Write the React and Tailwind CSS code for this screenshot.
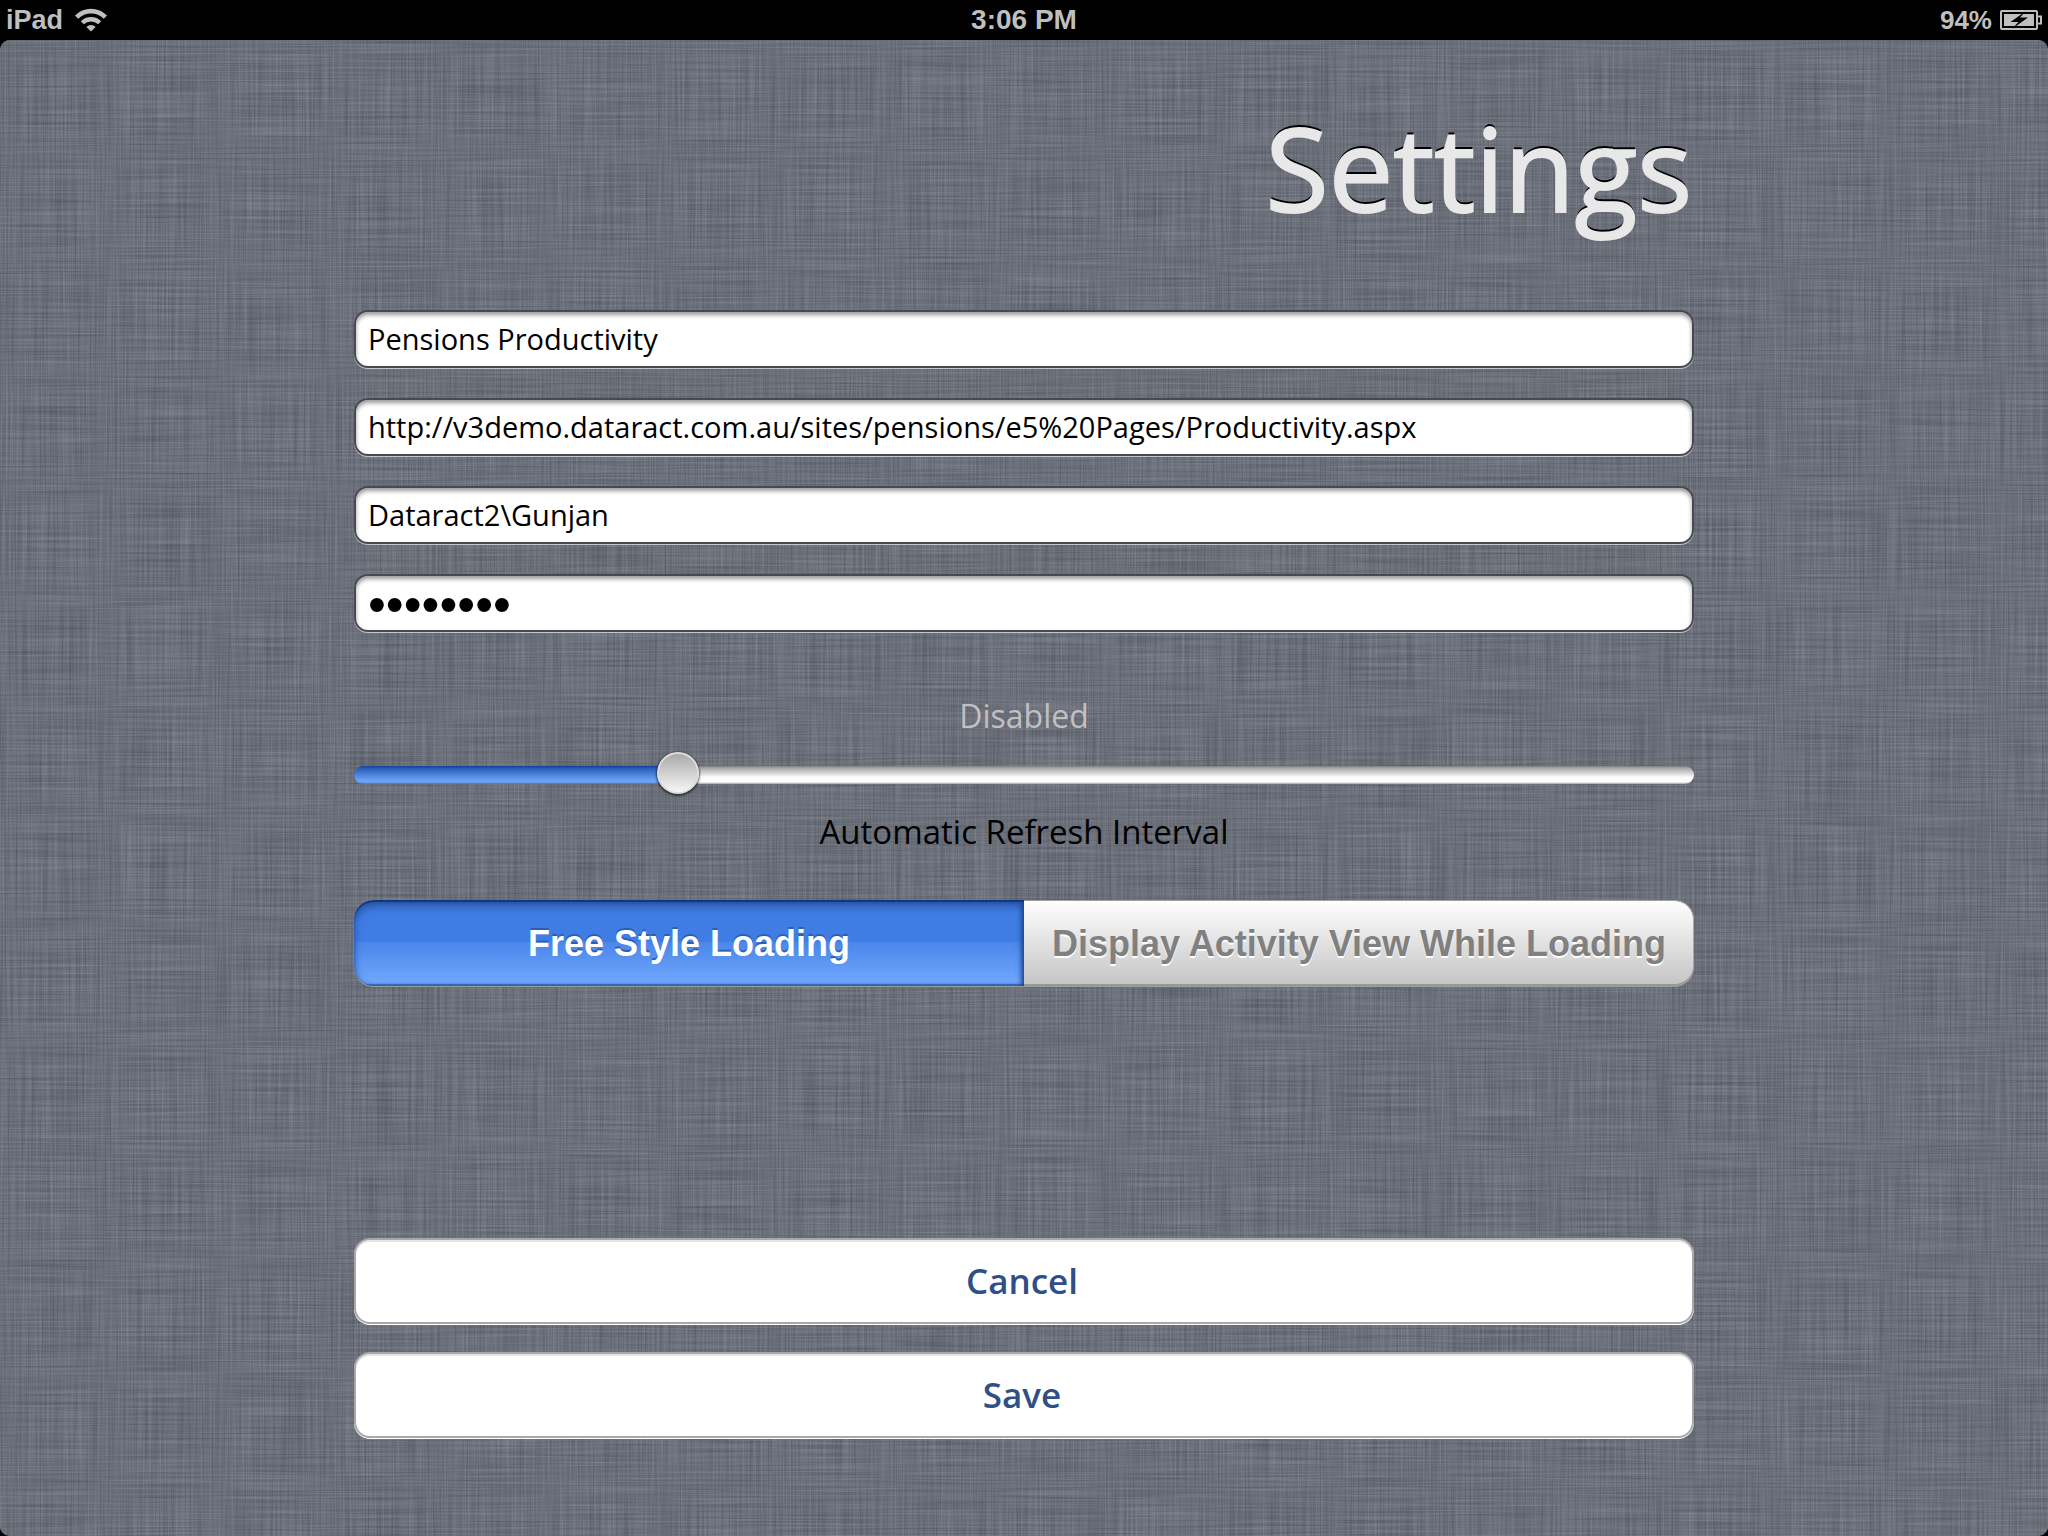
import { useState } from "react";

const FIELD =
  "block h-[58px] w-full rounded-[14px] border-2 border-[#484a50] bg-white px-3 text-black outline-none shadow-[inset_0_3px_4px_rgba(0,0,0,0.4),0_1px_0_#c4c6ca]";

const TEXT_FIELD = "pb-0.5 font-['Open_Sans',sans-serif] text-[29px]";

const ACTION =
  "h-[86px] w-full rounded-[16px] border-2 border-[#a8a8a9] bg-white pr-1 font-['Open_Sans',sans-serif] text-[35px] font-semibold text-[#2f4f87] shadow-[inset_0_2px_0_#e6e6e6,0_1px_0_#ffffff]";

function Linen() {
  return (
    <svg className="absolute inset-0 h-full w-full" aria-hidden="true">
      <filter id="linen" x="0" y="0" width="100%" height="100%" colorInterpolationFilters="sRGB">
        <feTurbulence type="fractalNoise" baseFrequency="0.6 0.009" numOctaves="2" seed="4" />
        <feColorMatrix
          result="warp"
          values="0.3 0 0 0 0.27  0.3 0 0 0 0.286  0.3 0 0 0 0.325  0 0 0 0 1"
        />
        <feTurbulence type="fractalNoise" baseFrequency="0.009 0.6" numOctaves="2" seed="9" />
        <feColorMatrix
          result="weft"
          values="0.3 0 0 0 0.27  0.3 0 0 0 0.286  0.3 0 0 0 0.325  0 0 0 0 1"
        />
        <feComposite in="warp" in2="weft" operator="arithmetic" k1="0" k2="0.5" k3="0.5" k4="0" />
      </filter>
      <rect width="100%" height="100%" filter="url(#linen)" />
    </svg>
  );
}

function WifiIcon() {
  return (
    <svg className="h-6 w-8" viewBox="0 0 32 24" fill="none" stroke="#bfbfbf" aria-label="Wi-Fi">
      <path d="M1.6 9.1a20.4 20.4 0 0 1 28.8 0" strokeWidth="4.6" />
      <path d="M7.3 14.8a12.3 12.3 0 0 1 17.4 0" strokeWidth="4.4" />
      <path d="M16 23.5 11.4 18.9a6.5 6.5 0 0 1 9.2 0z" fill="#bfbfbf" stroke="none" />
    </svg>
  );
}

function BatteryIcon() {
  return (
    <svg className="h-5 w-[42px]" viewBox="0 0 42 20" aria-label="Charging">
      <rect x="1" y="1" width="36" height="18" rx="1" fill="none" stroke="#bfbfbf" strokeWidth="2" />
      <path d="M38 6.5h3v7h-3" fill="none" stroke="#bfbfbf" strokeWidth="2" />
      <rect x="4" y="4" width="30" height="12" fill="#bfbfbf" />
      <path d="M26 1 10.5 12h8L12 19l16-11.5h-8z" fill="#000" />
    </svg>
  );
}

export default function App() {
  const [name, setName] = useState("Pensions Productivity");
  const [url, setUrl] = useState(
    "http://v3demo.dataract.com.au/sites/pensions/e5%20Pages/Productivity.aspx"
  );
  const [user, setUser] = useState("Dataract2\\Gunjan");
  const [password, setPassword] = useState("password");
  const [interval, setIntervalValue] = useState(7);
  const [freeStyle, setFreeStyle] = useState(true);

  const selected =
    "bg-[linear-gradient(to_bottom,#3f7de4_0%,#3f7de4_48%,#4b87ea_49%,#70a6fd_97%,#4079d0_98%)] text-white [text-shadow:0_-2px_0_#2c5fb4] shadow-[inset_0_2px_0_#12387c,inset_-2px_0_4px_#1c4590,inset_0_6px_8px_#2652a0]";
  const plain =
    "bg-[linear-gradient(to_bottom,#ffffff,#c4c4c4)] text-[#808080] [text-shadow:0_2px_0_#ffffff] shadow-[inset_0_1px_0_#a0a0a0,inset_-1px_0_0_#a8a8a8,inset_0_-2px_0_#989898]";

  return (
    <div className="flex min-h-screen flex-col bg-black">
      <header className="grid h-10 grid-cols-3 items-center px-[6px] font-['Liberation_Sans',sans-serif] text-[28px] font-bold leading-8 text-[#bfbfbf]">
        <div className="flex items-center gap-3">
          <span className="text-[27px]">iPad</span>
          <WifiIcon />
        </div>
        <div className="text-center">3:06 PM</div>
        <div className="flex items-center justify-end gap-2">
          <span className="text-[26px]">94%</span>
          <BatteryIcon />
        </div>
      </header>

      <div className="relative flex-1 overflow-hidden rounded-[10px] bg-[#6b6f79]">
        <Linen />
        <main className="relative mx-auto flex w-full max-w-[1340px] flex-col pt-12">
          <h1 className="pr-0.5 text-right font-['Open_Sans',sans-serif] text-[115px] leading-[160px] text-[#e8e8e8] [-webkit-text-stroke:2px_#e8e8e8] [text-shadow:0_-3px_0_#000]">
            Settings
          </h1>

          <form
            className="flex flex-col pt-[62px]"
            onSubmit={(e) => e.preventDefault()}
          >
            <div className="flex flex-col gap-[30px]">
              <input
                aria-label="Name"
                className={`${FIELD} ${TEXT_FIELD}`}
                value={name}
                onChange={(e) => setName(e.target.value)}
              />
              <input
                aria-label="Address"
                className={`${FIELD} ${TEXT_FIELD}`}
                value={url}
                onChange={(e) => setUrl(e.target.value)}
              />
              <input
                aria-label="User name"
                className={`${FIELD} ${TEXT_FIELD}`}
                value={user}
                onChange={(e) => setUser(e.target.value)}
              />
              <input
                aria-label="Password"
                type="password"
                className={`${FIELD} pt-0.5 font-['Liberation_Sans',sans-serif] text-[51px] leading-none`}
                value={password}
                onChange={(e) => setPassword(e.target.value)}
              />
            </div>

            <div className="flex flex-col items-center pt-[61px] font-['Open_Sans',sans-serif] text-[32px] leading-[46px]">
              <output htmlFor="refresh" className="pb-0.5 text-[#c0c0c0]">
                Disabled
              </output>
              <input
                id="refresh"
                type="range"
                min="0"
                max="30"
                value={interval}
                onChange={(e) => setIntervalValue(Number(e.target.value))}
                style={{ "--fill": `${(interval / 30) * 100}%` }}
                className="my-3 h-[44px] w-full appearance-none bg-transparent outline-none [&::-webkit-slider-runnable-track]:h-[18px] [&::-webkit-slider-runnable-track]:rounded-[9px] [&::-webkit-slider-runnable-track]:bg-[linear-gradient(to_bottom,#0f419c_0px,#2c62bd_3px,#6aa0f2_14px,#6fa6f8_16px,#3873cc_18px),linear-gradient(to_bottom,#7c7c7c_0px,#a6a6a6_2px,#fafafa_11px,#ffffff_16px,#a0a0a0_18px)] [&::-webkit-slider-runnable-track]:bg-[length:var(--fill)_100%,100%_100%] [&::-webkit-slider-runnable-track]:bg-no-repeat [&::-webkit-slider-thumb]:-mt-[14px] [&::-webkit-slider-thumb]:size-[42px] [&::-webkit-slider-thumb]:appearance-none [&::-webkit-slider-thumb]:rounded-full [&::-webkit-slider-thumb]:border-2 [&::-webkit-slider-thumb]:border-[#dcdcdc] [&::-webkit-slider-thumb]:bg-[linear-gradient(to_bottom,#aaaaaa,#f6f6f6)] [&::-webkit-slider-thumb]:shadow-[0_1px_2px_1px_rgba(0,0,0,0.55)]"
              />
              <label htmlFor="refresh" className="text-[33px] text-black">
                Automatic Refresh Interval
              </label>
            </div>

            <div className="mt-[45px] flex h-[86px] overflow-hidden rounded-[20px] font-['Liberation_Sans',sans-serif] text-[36px] font-bold shadow-[0_1px_0_#9a9ca0]">
              <button
                type="button"
                aria-pressed={freeStyle}
                onClick={() => setFreeStyle(true)}
                className={`flex-1 rounded-l-[20px] pt-0.5 ${freeStyle ? selected : plain}`}
              >
                Free Style Loading
              </button>
              <button
                type="button"
                aria-pressed={!freeStyle}
                onClick={() => setFreeStyle(false)}
                className={`flex-1 rounded-r-[20px] pt-0.5 ${freeStyle ? plain : selected}`}
              >
                Display Activity View While Loading
              </button>
            </div>

            <div className="mt-[252px] flex flex-col gap-7">
              <button type="button" className={ACTION}>
                Cancel
              </button>
              <button type="submit" className={ACTION}>
                Save
              </button>
            </div>
          </form>
        </main>
      </div>
    </div>
  );
}
